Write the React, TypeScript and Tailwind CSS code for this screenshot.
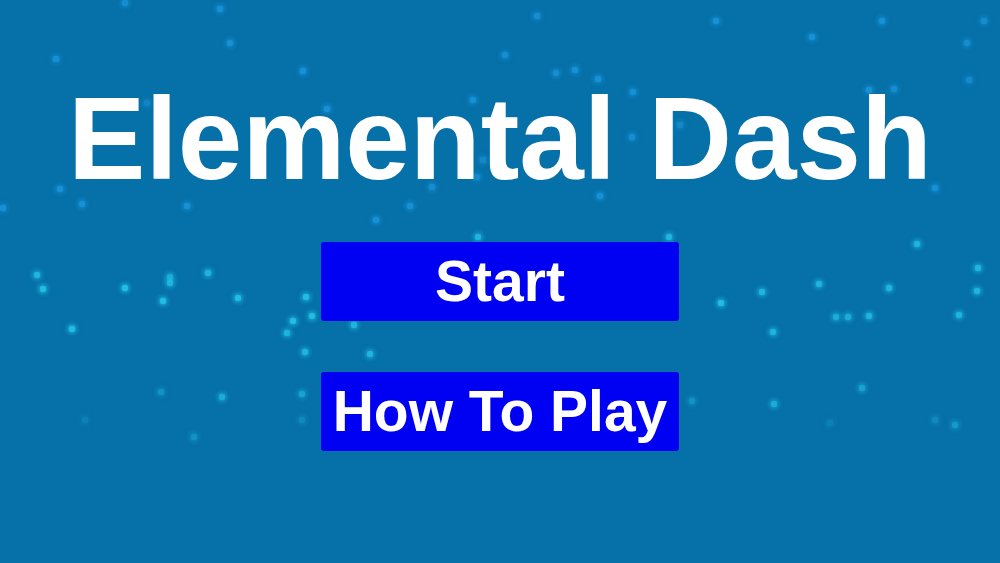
type Spark = [number, number, number];

const sparks: Spark[] = [
  [125, 3, 0.7], [220, 9, 0.8], [230, 43, 0.8], [56, 59, 0.8], [303, 71, 0.8],
  [147, 103, 0.5], [327, 109, 0.8], [473, 100, 0.8], [483, 160, 0.6], [477, 177, 0.6],
  [432, 187, 0.7], [60, 189, 0.8], [3, 208, 0.8], [82, 204, 0.8], [187, 206, 0.8],
  [410, 206, 0.8], [376, 220, 0.8], [478, 237, 0.8], [37, 275, 0.8], [208, 273, 0.8],
  [170, 277, 0.7], [537, 16, 0.7], [716, 21, 0.8], [882, 21, 0.8], [984, 21, 0.7],
  [812, 37, 0.8], [967, 43, 0.7], [505, 55, 0.7], [556, 73, 0.7], [575, 70, 0.8],
  [598, 79, 0.8], [633, 92, 0.8], [869, 90, 0.8], [894, 89, 0.7], [969, 80, 0.6],
  [680, 125, 0.6], [632, 137, 0.7], [600, 196, 0.8], [935, 188, 0.8], [669, 237, 0.8],
  [917, 244, 0.8], [978, 268, 0.8], [43, 289, 0.9], [125, 288, 0.9], [170, 283, 0.8],
  [163, 301, 0.9], [238, 298, 0.9], [306, 297, 0.9], [312, 316, 0.9], [293, 321, 0.9],
  [287, 333, 0.8], [72, 329, 0.9], [354, 325, 0.8], [305, 352, 0.8], [370, 354, 0.8],
  [161, 392, 0.4], [222, 397, 0.7], [302, 394, 0.6], [85, 420, 0.2], [302, 420, 0.3],
  [194, 437, 0.4], [819, 284, 0.8], [721, 303, 0.9], [762, 292, 0.8], [889, 288, 0.8],
  [977, 291, 0.8], [836, 317, 0.7], [848, 317, 0.7], [869, 316, 0.8], [959, 315, 0.8],
  [773, 332, 0.8], [862, 388, 0.6], [692, 401, 0.4], [774, 404, 0.7], [935, 420, 0.3],
  [955, 425, 0.5], [830, 423, 0.2],
];

function MenuButton({ label }: { label: string }) {
  return (
    <button className="flex h-[79px] w-[358px] items-center justify-center rounded-[3px] bg-[#0000f2] text-[57px] font-bold leading-none text-white">
      {label}
    </button>
  );
}

export default function App() {
  return (
    <div
      className="relative h-[563px] w-[1000px] overflow-hidden bg-[#0670a8]"
      style={{ fontFamily: '"Liberation Sans", Arial, sans-serif' }}
    >
      {sparks.map(([x, y, o], i) => (
        <span
          key={i}
          className="absolute h-[6px] w-[6px] rounded-[2px]"
          style={{
            left: x - 3,
            top: y - 3,
            opacity: o,
            background: y > 230 ? "#24c6e8" : "#1c9ae2",
            boxShadow: y > 230 ? "0 0 5px 1px #24c6e8" : "0 0 5px 1px #1c9ae2",
          }}
        />
      ))}

      <main className="relative flex flex-col items-center pt-[81px]">
        <h1 className="text-[116px] font-bold leading-none text-white">Elemental Dash</h1>
        <div className="mt-[45px] flex flex-col gap-[51px]">
          <MenuButton label="Start" />
          <MenuButton label="How To Play" />
        </div>
      </main>
    </div>
  );
}
